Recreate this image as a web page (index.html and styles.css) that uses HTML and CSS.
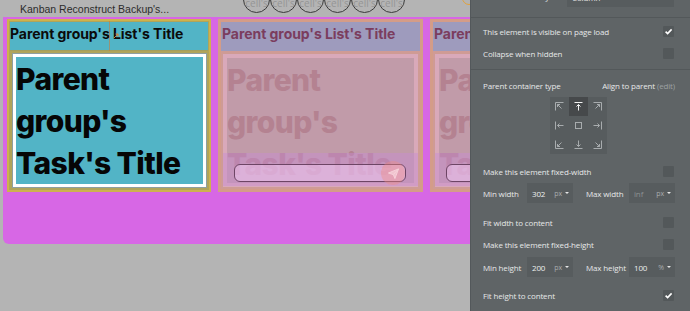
FILE: index.html
```html
<!DOCTYPE html>
<html>
<head>
<meta charset="utf-8">
<link rel="stylesheet" href="styles.css">
</head>
<body>
<div class="stage">
  <div class="topbar">
    <span class="apptitle">Kanban Reconstruct Backup's...</span>
    <div class="cells">
      <span class="cell">cell's</span><span class="cell">cell's</span><span class="cell">cell's</span><span class="cell">cell's</span><span class="cell">cell's</span><span class="cell">cell's</span>
    </div>
    <span class="ring"></span>
  </div>

  <div class="canvas">
    <div class="list list-active">
      <div class="list-head">Parent group's List's Title</div>
      <div class="cardwrap">
        <div class="card"><div class="task-title">Parent group's Task's Title</div></div>
      </div>
      <span class="guide"></span>
      <svg class="guide-mark" width="6" height="6" viewBox="0 0 6 6"><path d="M1 5L5 1M2.5 1H5V3.5" stroke="#d9822f" stroke-width="1" fill="none"/></svg>
    </div>

    <div class="list list-faded">
      <div class="list-head">Parent group's List's Title</div>
      <div class="cardwrap">
        <div class="card"><div class="task-title">Parent group's Task's Title</div></div>
        <div class="composer">
          <div class="composer-input"></div>
          <span class="send"><svg width="13" height="13" viewBox="0 0 14 14"><path d="M1.5 6.5L12.5 2L8.5 12.5L6.8 8.2Z M6.8 8.2L12.5 2" stroke="#f6d2da" stroke-width="1" fill="#f0c4cf" stroke-linejoin="round"/></svg></span>
        </div>
      </div>
    </div>

    <div class="list list-faded">
      <div class="list-head">Parent group's List's Title</div>
      <div class="cardwrap">
        <div class="card"><div class="task-title">Parent group's Task's Title</div></div>
        <div class="composer">
          <div class="composer-input"></div>
          <span class="send"><svg width="13" height="13" viewBox="0 0 14 14"><path d="M1.5 6.5L12.5 2L8.5 12.5L6.8 8.2Z M6.8 8.2L12.5 2" stroke="#f6d2da" stroke-width="1" fill="#f0c4cf" stroke-linejoin="round"/></svg></span>
        </div>
      </div>
    </div>
  </div>

  <aside class="panel">
    <div class="sec sec-top">
      <span class="lbl cut">Child container layout</span>
      <span class="field field-wide">Column</span>
    </div>

    <div class="sec sec-vis">
      <div class="row"><span class="lbl">This element is visible on page load</span><span class="cb checked"><svg width="11" height="11" viewBox="0 0 11 11"><path d="M2.6 5.6L4.6 7.6L8.6 3.4" stroke="#fff" stroke-width="1.6" fill="none"/></svg></span></div>
      <div class="row"><span class="lbl">Collapse when hidden</span><span class="cb"></span></div>
    </div>

    <div class="sec sec-layout">
      <div class="row"><span class="lbl">Parent container type</span><span class="lbl right">Align to parent <span class="muted">(edit)</span></span></div>

      <div class="align-grid">
        <span><svg width="9" height="9" viewBox="0 0 9 9"><path d="M0.5 8.5V0.5H8.5M6.5 6.5L2.5 2.5M2.5 2.5H5M2.5 2.5V5"/></svg></span>
        <span class="on"><svg width="9" height="9" viewBox="0 0 9 9"><path d="M0.5 0.5H8.5M4.5 8.5V2.5M2.5 4.5L4.5 2.5L6.5 4.5"/></svg></span>
        <span><svg width="9" height="9" viewBox="0 0 9 9"><path d="M0.5 0.5H8.5V8.5M2.5 6.5L6.5 2.5M6.5 2.5H4M6.5 2.5V5"/></svg></span>
        <span><svg width="9" height="9" viewBox="0 0 9 9"><path d="M0.5 0.5V8.5M8.5 4.5H2.5M4.5 2.5L2.5 4.5L4.5 6.5"/></svg></span>
        <span><svg width="9" height="9" viewBox="0 0 9 9"><rect x="1.5" y="1.5" width="6" height="6"/></svg></span>
        <span><svg width="9" height="9" viewBox="0 0 9 9"><path d="M8.5 0.5V8.5M0.5 4.5H6.5M4.5 2.5L6.5 4.5L4.5 6.5"/></svg></span>
        <span><svg width="9" height="9" viewBox="0 0 9 9"><path d="M0.5 0.5V8.5H8.5M6.5 2.5L2.5 6.5M2.5 6.5H5M2.5 6.5V4"/></svg></span>
        <span><svg width="9" height="9" viewBox="0 0 9 9"><path d="M0.5 8.5H8.5M4.5 0.5V6.5M2.5 4.5L4.5 6.5L6.5 4.5"/></svg></span>
        <span><svg width="9" height="9" viewBox="0 0 9 9"><path d="M8.5 0.5V8.5H0.5M2.5 2.5L6.5 6.5M6.5 6.5H4M6.5 6.5V4"/></svg></span>
      </div>

      <div class="row row-fw"><span class="lbl">Make this element fixed-width</span><span class="cb"></span></div>

      <div class="dims dims-w">
        <span class="lbl dim-lbl">Min width</span>
        <span class="field"><span class="val">302</span><span class="unit">px<i class="caret"></i></span></span>
        <span class="lbl dim-lbl dim-lbl2">Max width</span>
        <span class="field"><span class="val dim">inf</span><span class="unit">px<i class="caret"></i></span></span>
      </div>

      <div class="row row-fitw"><span class="lbl">Fit width to content</span><span class="cb"></span></div>
      <div class="row"><span class="lbl">Make this element fixed-height</span><span class="cb"></span></div>

      <div class="dims dims-h">
        <span class="lbl dim-lbl">Min height</span>
        <span class="field"><span class="val">200</span><span class="unit">px<i class="caret"></i></span></span>
        <span class="lbl dim-lbl dim-lbl2">Max height</span>
        <span class="field"><span class="val">100</span><span class="unit">%<i class="caret"></i></span></span>
      </div>

      <div class="row row-fith"><span class="lbl">Fit height to content</span><span class="cb checked"><svg width="11" height="11" viewBox="0 0 11 11"><path d="M2.6 5.6L4.6 7.6L8.6 3.4" stroke="#fff" stroke-width="1.6" fill="none"/></svg></span></div>
    </div>
  </aside>
</div>
</body>
</html>
```

FILE: styles.css
```css
html, body {
  margin: 0;
  padding: 0;
}

body {
  background: #b4b4b4;
  width: 690px;
  height: 311px;
  overflow: hidden;
  font-family: "Open Sans", sans-serif;
}

.stage {
  position: relative;
  width: 690px;
  height: 311px;
  overflow: hidden;
}

/* ---------- top bar ---------- */
.topbar {
  position: relative;
  height: 17px;
  display: flex;
  align-items: flex-start;
}

.apptitle {
  box-sizing: border-box;
  width: 243px;
  flex: none;
  padding-left: 20px;
  font: 10.5px/19px "Liberation Sans", sans-serif;
  color: #2c2c2c;
  white-space: nowrap;
}

.cells {
  display: flex;
  margin-top: -14px;
}

.cell {
  box-sizing: border-box;
  width: 27px;
  height: 27px;
  border: 1px solid #3a3a3a;
  border-radius: 50%;
  display: flex;
  align-items: flex-end;
  justify-content: center;
  padding-bottom: 4px;
  font: 10px/10px "Open Sans", sans-serif;
  color: #949494;
  overflow: hidden;
  white-space: nowrap;
}

.ring {
  position: absolute;
  left: 462px;
  top: -9px;
  width: 12px;
  height: 12px;
  border: 1.5px solid #e2a23a;
  border-radius: 50%;
}

/* ---------- canvas ---------- */
.canvas {
  box-sizing: border-box;
  margin-left: 3px;
  width: 467px;
  height: 227px;
  overflow: hidden;
  background: #d767e5;
  border-bottom-left-radius: 6px;
  display: flex;
  align-items: flex-start;
  gap: 7px;
  padding: 2px 0 0 4px;
}

.list {
  box-sizing: border-box;
  height: 173px;
  flex: none;
  display: flex;
  flex-direction: column;
  position: relative;
}

.list-active {
  width: 204px;
  border: 2px solid #cdb24e;
  background: #b0a45a;
  padding: 1px;
}

.list-faded {
  width: 205px;
  border: 3px solid #d49c88;
  background: #cf9b95;
}

.list-head {
  box-sizing: border-box;
  height: 29px;
  flex: none;
  font: 700 14px/24px Inter, sans-serif;
  letter-spacing: -0.05px;
  white-space: nowrap;
  overflow: hidden;
}

.list-active .list-head {
  background: #52b4c6;
  color: #0b0b0b;
  border-bottom: 1px solid #a49e5c;
}

.list-faded .list-head {
  background: #9e9bbd;
  color: #7b3d5e;
  padding-left: 1px;
}

.cardwrap {
  position: relative;
  flex: 1;
}

.list-active .cardwrap {
  padding: 3px 2px 1px 3px;
}

.list-faded .cardwrap {
  padding: 3px 2px 2px 2px;
}

.card {
  box-sizing: border-box;
  height: 133px;
  overflow: hidden;
}

.list-active .card {
  border: 3px solid #ffffff;
  background: #52b4c6;
  box-shadow: 0 0 0 1px #8f9fa0;
}

.list-faded .card {
  border: 4px solid #d9a9ba;
  background: #c19ba9;
}

.task-title {
  padding-top: 1px;
  font: 800 30px/42px Inter, sans-serif;
  letter-spacing: -0.6px;
}

.list-active .task-title {
  color: #060606;
}

.list-faded .task-title {
  color: #b48291;
}

.guide {
  position: absolute;
  left: 100px;
  top: 0;
  width: 1px;
  height: 30px;
  background: rgba(214, 120, 50, 0.55);
}

.guide-mark {
  position: absolute;
  left: 104px;
  top: 12px;
}

.composer {
  position: absolute;
  left: 2px;
  right: 2px;
  top: 102px;
  height: 33px;
  background: rgba(200, 140, 210, 0.45);
}

.composer-input {
  position: absolute;
  left: 11px;
  top: 11px;
  box-sizing: border-box;
  width: 172px;
  height: 18px;
  border: 1px solid #6d4565;
  border-radius: 6px;
  background: rgba(240, 200, 240, 0.55);
}

.send {
  position: absolute;
  left: 158px;
  top: 8px;
  width: 24px;
  height: 24px;
  border-radius: 50%;
  background: rgba(240, 140, 130, 0.4);
  display: flex;
  align-items: center;
  justify-content: center;
}

/* ---------- property panel ---------- */
.panel {
  position: absolute;
  left: 470px;
  top: 0;
  box-sizing: border-box;
  width: 220px;
  height: 311px;
  background: #5f6466;
  border-left: 1px solid #53585b;
  font: 8px "Open Sans", sans-serif;
  letter-spacing: -0.15px;
  color: #e6e8e8;
}

.sec {
  padding: 0 16px 0 12px;
}

.sec-top {
  height: 17px;
  display: flex;
  align-items: flex-start;
  border-bottom: 1px solid #53585a;
}

.sec-top .cut {
  margin-top: -8px;
  line-height: 10px;
}

.field {
  box-sizing: border-box;
  width: 46px;
  height: 20px;
  background: #575c5e;
  display: flex;
  align-items: center;
  padding: 0 4px 0 5px;
  flex: none;
}

.field-wide {
  width: 107px;
  margin-left: auto;
  margin-top: -13px;
  color: #e8e8e8;
}

.sec-vis {
  padding-top: 2px;
  padding-bottom: 5px;
  border-bottom: 1px solid #53585a;
}

.sec-layout {
  padding-top: 4px;
}

.row {
  height: 22px;
  display: flex;
  align-items: center;
}

.lbl {
  white-space: nowrap;
}

.right {
  margin-left: auto;
  margin-right: -1px;
}

.muted {
  color: #9ca0a2;
}

.cb {
  margin-left: auto;
  width: 11px;
  height: 11px;
  background: #53585a;
  border-radius: 1px;
  display: flex;
  flex: none;
}

.align-grid {
  margin: 1px 0 0 67px;
  width: 57px;
  display: grid;
  grid-template-columns: repeat(3, 19px);
  grid-template-rows: repeat(3, 19px);
  background: #575c5e;
}

.align-grid span {
  display: flex;
  align-items: center;
  justify-content: center;
}

.align-grid svg {
  stroke: #a8acae;
  stroke-width: 1;
  fill: none;
}

.align-grid .on {
  background: #46494b;
}

.align-grid .on svg {
  stroke: #f2f2f2;
}

.row-fw {
  margin-top: 6px;
}

.dims {
  height: 20px;
  display: flex;
  align-items: center;
}

.dims-w {
  margin-top: 1px;
}

.dims-h {
  margin-top: 2px;
}

.dim-lbl {
  width: 44px;
  flex: none;
}

.dim-lbl2 {
  margin-left: 13px;
  width: 43px;
}

.val {
  color: #eceeee;
}

.val.dim {
  color: #8c9092;
}

.unit {
  margin-left: auto;
  color: #a9adaf;
  font-size: 7px;
  display: flex;
  align-items: center;
}

.caret {
  margin-left: 3px;
  width: 0;
  height: 0;
  border-left: 2px solid transparent;
  border-right: 2px solid transparent;
  border-top: 2px solid #e6e6e6;
}

.row-fitw {
  margin-top: 8px;
}

.row-fith {
  margin-top: 7px;
}
```
